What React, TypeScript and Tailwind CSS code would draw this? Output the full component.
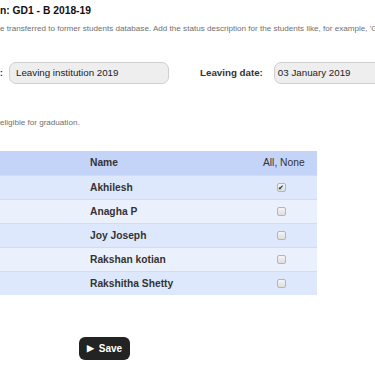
import React from 'react';

const students = [
  { name: 'Akhilesh', checked: true },
  { name: 'Anagha P', checked: false },
  { name: 'Joy Joseph', checked: false },
  { name: 'Rakshan kotian', checked: false },
  { name: 'Rakshitha Shetty', checked: false },
];

// text that runs off the left edge of the window
function Cut({ children }: { children: React.ReactNode }) {
  return <span className="flex w-0 shrink-0 justify-end whitespace-nowrap">{children}</span>;
}

function Box({ checked }: { checked: boolean }) {
  return (
    <span className="flex h-[9px] w-[9px] items-center justify-center rounded-[2px] border border-[#b5b5b5] bg-gradient-to-b from-[#f4f4f4] to-[#dedede] text-[7px] leading-none text-[#222]">
      {checked ? '✔' : ''}
    </span>
  );
}

export default function App() {
  return (
    <div className="h-[366px] w-[375px] overflow-hidden bg-white font-['Liberation_Sans',Arial,sans-serif] text-[#222]">
      {/* Title */}
      <h1 className="flex pt-[4px] text-[10.3px] font-bold leading-[14px] text-[#111]">
        <Cut>Graduation of students in sectio</Cut>
        <span className="whitespace-nowrap">n: GD1 - B 2018-19</span>
      </h1>

      <p className="mt-[6px] flex text-[8.1px] leading-[10px] text-[#6f6f6f]">
        <Cut>Selected students will b</Cut>
        <span className="whitespace-nowrap">
          e transferred to former students database. Add the status description for the students like, for example, 'Graduated 2019'.
        </span>
      </p>

      {/* Status + date */}
      <div className="mt-[28px] flex items-center whitespace-nowrap">
        <span className="flex w-[3px] shrink-0 justify-end text-[9.75px] font-bold text-[#333]">Status description:</span>
        <div className="ml-[6px] flex h-[22px] w-[160px] shrink-0 items-center rounded-[7px] border border-[#cfcfcf] bg-[#eeeeee] pl-[6px] text-[9.75px] text-[#222]">
          Leaving institution 2019
        </div>
        <span className="ml-[31px] shrink-0 text-[9.75px] font-bold text-[#333]">Leaving date:</span>
        <div className="ml-[11px] flex h-[22px] w-[130px] shrink-0 items-center rounded-[7px] border border-[#cfcfcf] bg-[#eeeeee] pl-[3px] text-[9.75px] text-[#222]">
          03 January 2019
        </div>
      </div>

      <p className="mt-[34px] flex text-[8.1px] leading-[10px] text-[#6f6f6f]">
        <Cut>Students who are not </Cut>
        <span className="whitespace-nowrap">eligible for graduation.</span>
      </p>

      {/* Students table */}
      <div className="mt-[23px] w-[317px] text-[10.25px]">
        <div className="grid h-[24px] grid-cols-[86px_1fr_72px] items-center bg-[#c3d4f8]">
          <span />
          <span className="pl-[4px] font-bold text-[#333]">Name</span>
          <span className="pl-[18px] text-[#333]">All, None</span>
        </div>
        {students.map((s, i) => (
          <div
            key={s.name}
            className={
              'grid h-[24px] grid-cols-[86px_1fr_72px] items-center border-t border-[#cddcf8] ' +
              (i % 2 === 0 ? 'bg-[#dde8fc]' : 'bg-[#eaf1fd]')
            }
          >
            <span />
            <span className="pl-[4px] font-bold text-[#333]">{s.name}</span>
            <span className="flex justify-center">
              <Box checked={s.checked} />
            </span>
          </div>
        ))}
      </div>

      <div className="mt-[42px] pl-[79px]">
        <button className="flex h-[23px] w-[51px] items-center justify-center gap-[5px] rounded-[6px] bg-[#232323] text-[10px] font-bold text-white">
          <span className="text-[9px] leading-none">▶</span>
          <span>Save</span>
        </button>
      </div>
    </div>
  );
}
